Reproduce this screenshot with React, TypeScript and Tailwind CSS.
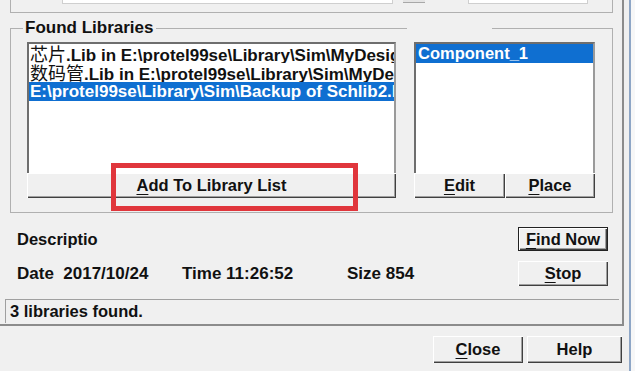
import React from 'react';

const btn =
  'flex items-center justify-center bg-[#f0f0f0] text-[16.5px] font-bold text-[#111] shadow-[inset_1px_1px_0_#ffffff,inset_-1px_-1px_0_#404040,inset_-2px_-2px_0_#a0a0a0]';

function Key({ k, rest }: { k: string; rest: string }) {
  return (
    <span>
      <span className="underline underline-offset-[3px] decoration-1">{k}</span>
      {rest}
    </span>
  );
}

export default function App() {
  return (
    <div className="relative flex w-[635px] h-[371px] overflow-hidden bg-[#f0f0f0] text-[#111] font-['Liberation_Sans',Arial,'Noto_Sans_CJK_SC',sans-serif]">
      <div className="w-[629px] flex flex-col">
        {/* main panel */}
        <div className="w-[624px] h-[326px] flex flex-col border-r-2 border-b-2 border-[#8c8c8c]">
          {/* bottom of the search group above */}
          <div className="ml-[10px] w-[603px] h-[13px] flex items-start border-x border-b border-[#b0b0b0]">
            <div className="ml-[51px] w-[331px] h-[4px] bg-white border-x border-b border-[#cfcfcf]" />
            <div className="ml-[10px] w-[22px] h-[3px] bg-[#e4e4e4] border-b border-[#a8a8a8]" />
            <div className="ml-[43px] w-[120px] h-[4px] bg-white border-x border-b border-[#cfcfcf]" />
          </div>

          {/* Found Libraries group */}
          <div className="ml-[10px] mt-[7px] w-[603px] flex flex-col">
            <div className="flex h-[16px]">
              <div className="w-[13px] h-[8px] self-end border-l border-t border-[#b0b0b0]" />
              <span className="ml-[2px] mr-[3px] text-[17px] font-bold leading-[16px]">Found Libraries</span>
              <div className="flex-1 h-[8px] self-end border-t border-[#b0b0b0]" />
              <div className="w-[85px]" />
              <div className="w-[121px] h-[8px] self-end border-t border-r border-[#b0b0b0]" />
            </div>
            <div className="h-[177px] flex pt-[6px] pl-[16px] gap-[18px] border-x border-b border-[#b0b0b0]">
              <div className="w-[369px] flex flex-col">
                <div className="h-[131px] bg-white border-t-2 border-l-2 border-r-2 border-t-[#6e6e6e] border-l-[#6e6e6e] border-r-[#9a9a9a] overflow-hidden">
                  <div className="h-[19px] px-[1px] whitespace-nowrap overflow-hidden text-[17px] font-bold leading-[19px]">
                    <span className="font-normal text-[18px] leading-[19px] font-['Noto_Sans_CJK_SC',sans-serif]">芯片</span>.Lib in E:\protel99se\Library\Sim\MyDesign
                  </div>
                  <div className="h-[19px] px-[1px] whitespace-nowrap overflow-hidden text-[17px] font-bold leading-[19px]">
                    <span className="font-normal text-[18px] leading-[19px] font-['Noto_Sans_CJK_SC',sans-serif]">数码管</span>.Lib in E:\protel99se\Library\Sim\MyDesign
                  </div>
                  <div className="h-[19px] px-[1px] whitespace-nowrap overflow-hidden text-[17px] font-bold leading-[19px] bg-[#0f6fd1] text-white">
                    E:\protel99se\Library\Sim\Backup of Schlib2.lib
                  </div>
                </div>
                <div className={`${btn} h-[25px]`}>
                  <Key k="A" rest="dd To Library List" />
                </div>
              </div>
              <div className="w-[181px] flex flex-col">
                <div className="h-[131px] bg-white border-t-2 border-l-2 border-r-2 border-t-[#6e6e6e] border-l-[#6e6e6e] border-r-[#9a9a9a] overflow-hidden">
                  <div className="h-[19px] px-[2px] text-[16.5px] font-bold leading-[19px] bg-[#0f6fd1] text-white">Component_1</div>
                </div>
                <div className="flex h-[25px]">
                  <div className={`${btn} w-[91px]`}>
                    <Key k="E" rest="dit" />
                  </div>
                  <div className={`${btn} flex-1`}>
                    <Key k="P" rest="lace" />
                  </div>
                </div>
              </div>
            </div>
          </div>

          {/* description / details */}
          <div className="mt-[14px] h-[24px] flex items-center pl-[17px] pr-[14px]">
            <span className="text-[16.5px] font-bold">Descriptio</span>
            <div className={`${btn} ml-auto w-[90px] h-[24px] border border-[#222]`}>
              <Key k="F" rest="ind Now" />
            </div>
          </div>
          <div className="mt-[10px] h-[25px] flex items-center pl-[17px] pr-[14px] text-[17px] font-bold">
            <span className="w-[165px]">Date&nbsp; 2017/10/24</span>
            <span className="w-[165px]">Time&nbsp;11:26:52</span>
            <span>Size&nbsp;854</span>
            <div className={`${btn} ml-auto w-[90px] h-[25px]`}>
              <Key k="S" rest="top" />
            </div>
          </div>

          {/* status bar */}
          <div className="mt-[13px] ml-[5px] w-[614px] h-[24px] flex items-center pl-[4px] border-t border-l border-[#a0a0a0] text-[16.5px] font-bold">
            3 libraries found.
          </div>
        </div>

        {/* dialog buttons */}
        <div className="mt-[10px] flex gap-[4px] pl-[433px]">
          <div className={`${btn} w-[90px] h-[27px]`}>
            <Key k="C" rest="lose" />
          </div>
          <div className={`${btn} w-[95px] h-[27px]`}>Help</div>
        </div>
      </div>

      {/* window edge */}
      <div className="w-[2px] h-full bg-[#8ea6c6]" />
      <div className="flex-1 h-full bg-[#f7f7f7]" />

      {/* red annotation box */}
      <div className="absolute left-[111px] top-[163px] w-[247px] h-[48px] border-[5px] border-[#e0363c]" />
    </div>
  );
}
